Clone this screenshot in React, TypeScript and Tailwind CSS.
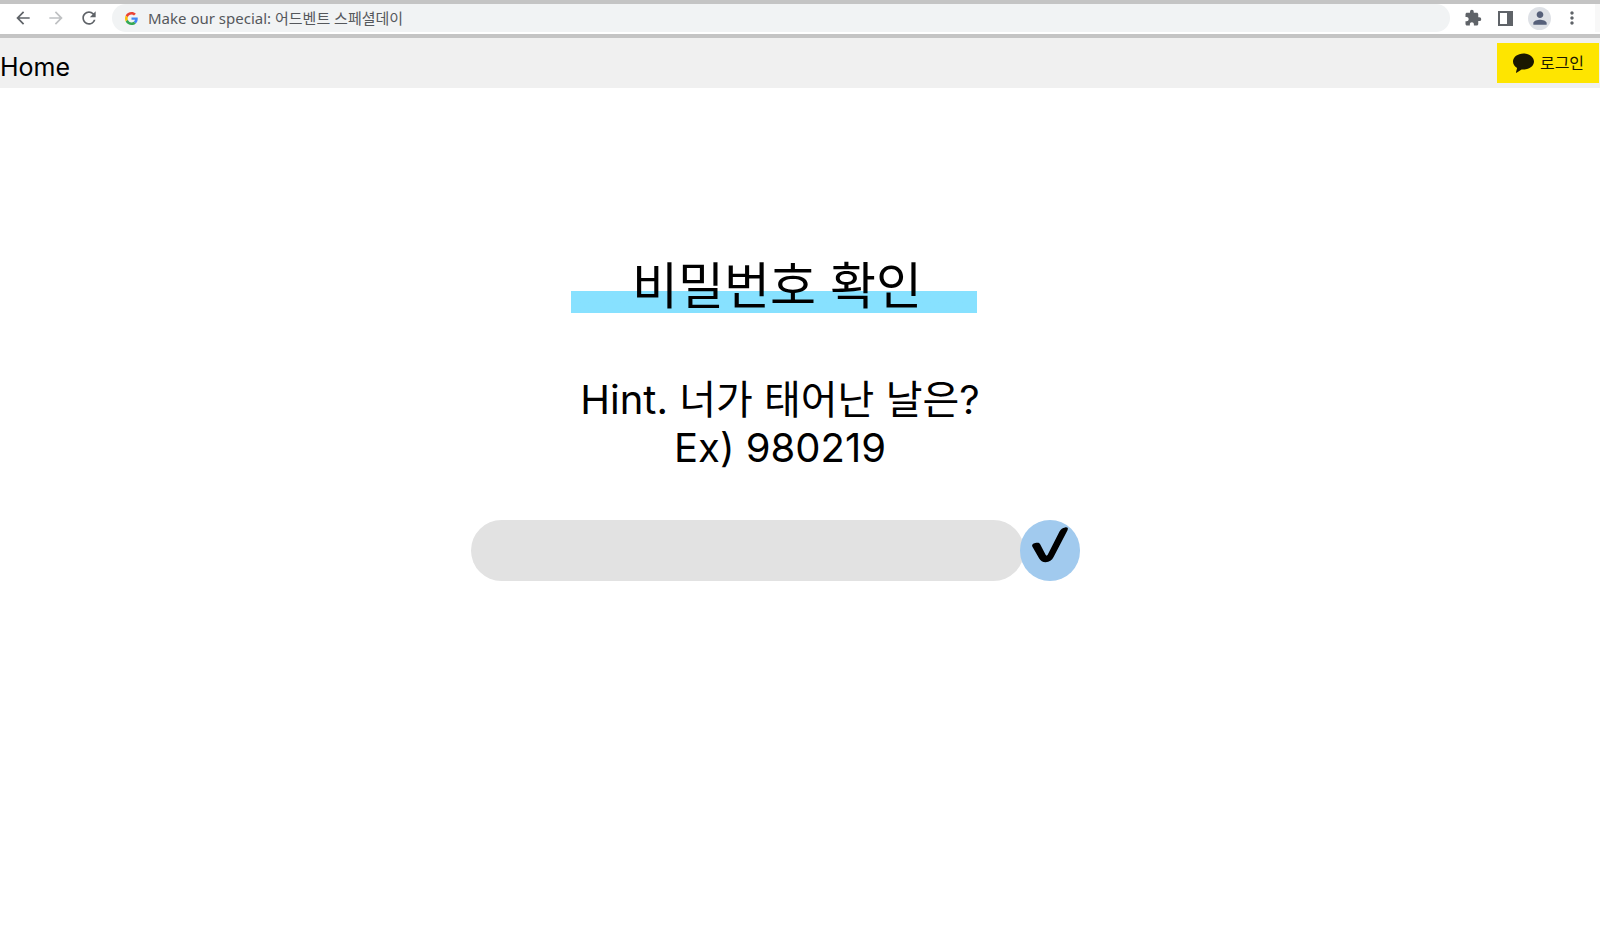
import { useState } from "react";
import { MdArrowBack, MdArrowForward, MdExtension, MdMoreVert, MdPerson, MdRefresh } from "react-icons/md";

function GoogleMark() {
  return (
    <svg viewBox="0 0 48 48" className="size-[13px] shrink-0" aria-hidden="true">
      <path fill="#EA4335" d="M24 9.5c3.54 0 6.71 1.22 9.21 3.6l6.85-6.85C35.9 2.38 30.47 0 24 0 14.62 0 6.51 5.38 2.56 13.22l7.98 6.19C12.43 13.72 17.74 9.5 24 9.5z" />
      <path fill="#4285F4" d="M46.98 24.55c0-1.57-.15-3.09-.38-4.55H24v9.02h12.94c-.58 2.96-2.26 5.48-4.78 7.18l7.73 6c4.51-4.18 7.09-10.36 7.09-17.65z" />
      <path fill="#FBBC05" d="M10.53 28.59c-.48-1.45-.76-2.99-.76-4.59s.27-3.14.76-4.59l-7.98-6.19C.92 16.46 0 20.12 0 24c0 3.88.92 7.54 2.56 10.78l7.97-6.19z" />
      <path fill="#34A853" d="M24 48c6.48 0 11.93-2.13 15.89-5.81l-7.73-6c-2.15 1.45-4.92 2.3-8.16 2.3-6.26 0-11.57-4.22-13.47-9.91l-7.98 6.19C6.51 42.62 14.62 48 24 48z" />
    </svg>
  );
}

function BrowserBar() {
  const [address, setAddress] = useState("Make our special: 어드벤트 스페셜데이");
  return (
    <header className="flex h-[38px] items-center border-y-4 border-[#c4c4c4] bg-white pb-0.5 text-[#5f6368]">
      <div className="flex items-center gap-[13px] pl-[13px]">
        <button type="button" aria-label="Back">
          <MdArrowBack className="size-5" />
        </button>
        <button type="button" aria-label="Forward" className="text-[#bfc1c3]">
          <MdArrowForward className="size-5" />
        </button>
        <button type="button" aria-label="Reload">
          <MdRefresh className="size-5" />
        </button>
      </div>
      <div className="ml-[13px] flex h-7 flex-1 items-center gap-2.5 rounded-full bg-[#f1f3f4] pl-[13px]">
        <GoogleMark />
        <input
          type="text"
          aria-label="Address"
          value={address}
          onChange={(e) => setAddress(e.target.value)}
          className="w-full bg-transparent font-['Noto_Sans','Noto_Sans_CJK_KR',sans-serif] text-[15px] leading-5 text-[#55585c] outline-none"
        />
      </div>
      <div className="flex items-center self-stretch pl-3.5">
        <button type="button" aria-label="Extensions">
          <MdExtension className="size-[18px]" />
        </button>
        <button type="button" aria-label="Side panel" className="ml-4">
          <svg viewBox="0 0 15 15" className="size-[15px]" fill="currentColor" aria-hidden="true">
            <path fillRule="evenodd" d="M0 0h15v15H0zM2 2v11h7V2z" />
          </svg>
        </button>
        <button type="button" aria-label="Profile" className="ml-[15px] flex size-[23px] items-center justify-center rounded-full bg-[#dee1e6] text-[#56607a]">
          <MdPerson className="size-5" />
        </button>
        <button type="button" aria-label="Menu" className="ml-[11px]">
          <MdMoreVert className="size-5" />
        </button>
        <div className="ml-[13px] w-[5px] self-stretch bg-[#f8f8f8]" />
      </div>
    </header>
  );
}

function SiteNav() {
  return (
    <nav className="flex h-[50px] items-center justify-between bg-[#f0f0f0] pr-px text-black">
      <a href="#home" className="pt-2 text-[25px] leading-8">
        Home
      </a>
      <button type="button" className="flex h-10 w-[102px] items-center justify-center gap-1.5 bg-[#fee500] pl-px text-[16px] leading-6 text-[#1a1700]">
        <svg viewBox="0 0 21 20" className="h-5 w-[21px]" fill="currentColor" aria-hidden="true">
          <path d="M10.5.5C4.7.5 0 4.100 0 8.600c0 2.900 1.700 5 4.100 6.300L3 19.300c-.1.400.3.600.6.400l5-3.200c.6.100 1.200.1 1.900.1C16.300 16.600 21 13.100 21 8.600S16.300.5 10.500.5z" />
        </svg>
        로그인
      </button>
    </nav>
  );
}

export default function App() {
  const [password, setPassword] = useState("");
  return (
    <div className="min-h-screen bg-white font-['Inter','Noto_Sans_CJK_KR',sans-serif] text-black">
      <BrowserBar />
      <SiteNav />
      <main className="flex flex-col items-center pt-[160px] pr-[52px]">
        <h1 className="w-[406px] bg-linear-to-b from-transparent from-[43px] to-[#87e1ff] to-[43px] pt-3 pl-1.5 text-center text-[50px] leading-[53px]">
          비밀번호 확인
        </h1>
        <p className="pt-[63px] pl-3 text-center text-[40px] leading-12">
          <label htmlFor="password">
            Hint. 너가 태어난 날은?
            <br />
            Ex) 980219
          </label>
        </p>
        <form className="mt-12 flex pl-[3px]" onSubmit={(e) => e.preventDefault()}>
          <input
            id="password"
            type="text"
            value={password}
            onChange={(e) => setPassword(e.target.value)}
            className="h-[61px] w-[553px] rounded-full bg-[#e2e2e2] px-8 text-[28px] outline-none"
          />
          <button type="submit" aria-label="확인" className="-ml-1 h-[61px] w-[60px] rounded-full bg-[#a1caee]">
            <svg viewBox="0 0 60 61" className="size-full" aria-hidden="true">
              <path d="M12.300 26.500c-.7-2.200 1.200-3.200 4-3.700 2.400-.4 3.300.2 4 1.600l5.300 10.400c.6 1.100 1.500 1.100 2.100 0L39.500 11.500c1.300-2.500 3.100-3.800 5.600-4.100 2.700-.3 3.400.8 2.300 3L33.600 37c-1.700 3.300-4.200 5.200-8 5.200-3 0-5-1.300-6.400-3.700z" />
            </svg>
          </button>
        </form>
      </main>
    </div>
  );
}
